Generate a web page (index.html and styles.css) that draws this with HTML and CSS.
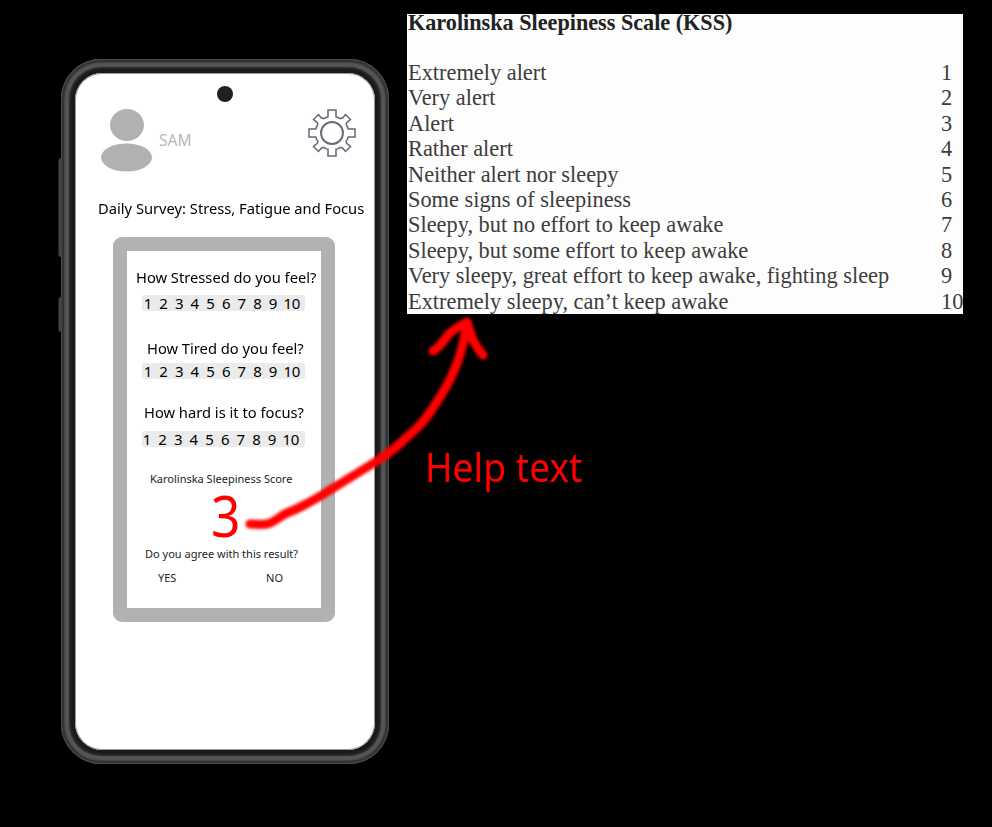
FILE: index.html
```html
<!DOCTYPE html>
<html lang="en">
<head>
<meta charset="utf-8">
<title>Daily Survey</title>
<link rel="stylesheet" href="styles.css">
</head>
<body>
<main class="board">
  <section class="phone">
    <span class="key key-volume"></span>
    <span class="key key-power"></span>
    <div class="screen">
      <span class="camera"></span>
      <header class="top">
        <div class="user">
          <svg class="avatar" width="52" height="64" viewBox="0 0 52 64"><ellipse cx="26" cy="16" rx="17" ry="16"/><ellipse cx="25.500" cy="48.500" rx="25.500" ry="14"/></svg>
          <span class="name">SAM</span>
        </div>
        <svg class="gear" width="48" height="48" viewBox="-24 -24 48 48">
          <path d="M-4-23H4V-16.200Q6-15.800 8.200-14.300L10.800-15.200L13.500-18.500L18.500-13.500L14.500-10L14.200-8.200Q15.800-6 16.200-4H23V4H16.200Q15.800 6 14.200 8.200L14.500 10L18.500 13.500L13.500 18.500L10.800 15.200L8.200 14.300Q6 15.800 4 16.200V23H-4V16.200Q-6 15.800-8.200 14.300L-10.800 15.200L-13.500 18.500L-18.500 13.500L-14.500 10L-14.200 8.200Q-15.800 6-16.200 4H-23V-4H-16.200Q-15.800-6-14.200-8.200L-14.500-10L-18.500-13.500L-13.500-18.500L-10.800-15.200L-8.200-14.300Q-6-15.800-4-16.200Z"/>
          <circle r="11"/>
        </svg>
      </header>
      <h1 class="title"><span>Daily Survey: Stress, Fatigue and Focus</span></h1>
      <div class="card">
        <p class="question stressed"><span>How Stressed do you feel?</span></p>
        <div class="scale"><b>1</b><b>2</b><b>3</b><b>4</b><b>5</b><b>6</b><b>7</b><b>8</b><b>9</b><b>10</b></div>
        <p class="question tired"><span>How Tired do you feel?</span></p>
        <div class="scale"><b>1</b><b>2</b><b>3</b><b>4</b><b>5</b><b>6</b><b>7</b><b>8</b><b>9</b><b>10</b></div>
        <p class="question focus"><span>How hard is it to focus?</span></p>
        <div class="scale"><b>1</b><b>2</b><b>3</b><b>4</b><b>5</b><b>6</b><b>7</b><b>8</b><b>9</b><b>10</b></div>
        <p class="small label">Karolinska Sleepiness Score</p>
        <p class="score"><span>3</span></p>
        <p class="small agree">Do you agree with this result?</p>
        <div class="small answers"><span>YES</span><span>NO</span></div>
      </div>
    </div>
  </section>
  <section class="side">
    <div class="kss">
      <h2>Karolinska Sleepiness Scale (KSS)</h2>
      <ol>
        <li><span>Extremely alert</span><i>1</i></li>
        <li><span>Very alert</span><i>2</i></li>
        <li><span>Alert</span><i>3</i></li>
        <li><span>Rather alert</span><i>4</i></li>
        <li><span>Neither alert nor sleepy</span><i>5</i></li>
        <li><span>Some signs of sleepiness</span><i>6</i></li>
        <li><span>Sleepy, but no effort to keep awake</span><i>7</i></li>
        <li><span>Sleepy, but some effort to keep awake</span><i>8</i></li>
        <li><span>Very sleepy, great effort to keep awake, fighting sleep</span><i>9</i></li>
        <li><span>Extremely sleepy, can’t keep awake</span><i>10</i></li>
      </ol>
    </div>
    <p class="help"><span>Help text</span></p>
  </section>
  <svg class="arrow" width="992" height="827" viewBox="0 0 992 827">
    <path d="M250 524C257 524 261 525 267 524C275 522 280 516 287 513C295 510 301 507 308 503C316 499 322 495 330 490C346 480 361 471 377 461C388 454 398 446 407 437C417 429 426 419 433 408C441 396 448 385 453 373C458 362 461 353 463 343C465 336 466 330 467 323"/>
    <path d="M433 351C440 348 444 339 450 333C456 328 461 325 467 322C469 328 471 335 473 340C476 346 479 350 483 355"/>
  </svg>
</main>
</body>
</html>
```

FILE: styles.css
```css
* { box-sizing: border-box; margin: 0; padding: 0; }
body { background: #000; width: 992px; height: 827px; overflow: hidden; font-family: "Noto Sans", sans-serif; color: #000; }
.board { position: relative; display: flex; width: 992px; height: 827px; padding-left: 61px; }
.title span, .question span, .score span, .help span { display: inline-block; white-space: nowrap; transform-origin: 0 0; }

.phone {
  position: relative; width: 328px; height: 705px; margin-top: 59px; padding: 14px; border-radius: 40px;
  background: #1b191a;
  box-shadow: inset 0 0 0 1px #4a4a4a, inset 0 0 0 3px #333, inset 0 0 1px 4px #444, inset 0 0 1px 8px #545555, inset 0 0 2px 10px #2c2c2c;
}
.key { position: absolute; left: -3px; width: 4px; background: #444; border-left: 1px solid #222; border-radius: 3px 0 0 3px; }
.key-volume { top: 99px; height: 99px; }
.key-power { top: 238px; height: 35px; }
.screen { display: flex; flex-direction: column; width: 300px; height: 677px; border-radius: 27px; background: #fff; box-shadow: 0 0 0 1px #999 inset; }
.camera { width: 16px; height: 16px; margin: 13px 0 0 142px; border-radius: 50%; background: #202020; }

.top { display: flex; justify-content: space-between; margin: 7px 19px 0 26px; }
.user { display: flex; gap: 6px; }
.avatar { fill: #b1b1b1; }
.name { margin-top: 19px; font-size: 15.500px; line-height: 24px; color: #b9b9b9; }
.gear { fill: none; stroke: #646878; stroke-width: 1.500; }
.gear circle { stroke-width: 1.900; }

.title { margin: 25px 0 0 23px; height: 20px; font-size: 15px; line-height: 20px; font-weight: 400; }
.title span { transform: scaleX(.98); }

.card { width: 222px; height: 385px; margin: 19px 0 0 38px; padding-top: 17px; border: 14px solid #b1b1b1; border-radius: 9px; }
.question { height: 18px; font-size: 15px; line-height: 18px; }
.question span { transform: scaleX(.98); }
.stressed { margin-left: 9px; }
.tired { margin: 28px 0 0 20px; }
.focus { margin: 24px 0 0 17px; }
.scale { display: grid; grid-template-columns: repeat(9, 15.650px) 22px; width: 163px; height: 16px; margin: 9px 0 0 15px; border-radius: 2px; background: #ebebeb; font-size: 15px; line-height: 16px; text-align: center; }
.scale b { font-weight: 400; transform: translateX(-2px); letter-spacing: -.300px; }
.tired + .scale { margin-top: 6px; }
.focus + .scale { margin-top: 10px; }
.focus + .scale b { transform: translateX(-3px); }

.small { height: 16px; font-size: 11px; line-height: 16px; color: #222; }
.label { margin: 24px 0 0 23px; }
.score { height: 50px; margin: 3px 0 0 84px; font-size: 56px; line-height: 51px; color: #f00; }
.score span { transform: scaleX(.92); }
.agree { margin: 6px 0 0 18px; }
.answers { display: flex; justify-content: space-between; margin: 8px 38px 0 31px; }

.side { margin: 14px 0 0 18px; }
.kss { width: 556px; height: 300px; overflow: hidden; background: #fdfdfd; font-family: "Liberation Serif", serif; font-size: 22.370px; color: #3c3c3c; }
.kss h2 { height: 46px; font-size: 22.200px; line-height: 17px; color: #222; padding-left: 1px; }
.kss ol { list-style: none; }
.kss li { display: grid; grid-template-columns: 533px 1fr; height: 25.400px; line-height: 25.400px; padding-left: 1px; white-space: nowrap; }
.kss i { font-style: normal; }
.help { margin: 128px 0 0 18px; height: 50px; font-size: 39.500px; line-height: 50px; color: #f00; }
.help span { transform: scaleX(.942); }

.arrow { position: absolute; left: 0; top: 0; fill: none; stroke: #f00; stroke-width: 9; stroke-linecap: round; stroke-linejoin: round; filter: blur(1.500px); pointer-events: none; }
```
